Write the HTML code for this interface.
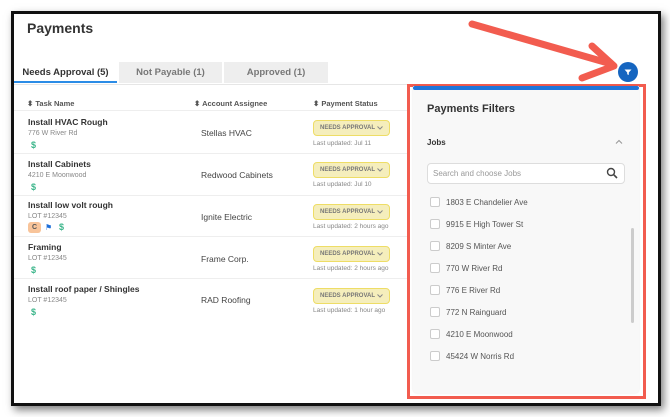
<!DOCTYPE html>
<html><head><meta charset="utf-8"><style>
*{margin:0;padding:0;box-sizing:border-box}
body{width:670px;height:417px;background:#fff;font-family:"Liberation Sans",sans-serif;position:relative;overflow:hidden;color:#333}
.frame{position:absolute;left:11px;top:11px;width:650px;height:395px;border:3px solid #111;background:#fff;box-shadow:3px 4px 8px rgba(0,0,0,.5)}
.a{position:absolute;white-space:nowrap}
h1{position:absolute;left:27px;top:20px;font-size:14px;font-weight:bold;color:#333}
.tab{position:absolute;top:62px;height:21px;font-size:9.5px;font-weight:bold;text-align:center;line-height:21px}
.th{position:absolute;top:99px;font-size:7.5px;font-weight:bold;color:#555}
.t{font-size:8.5px;font-weight:bold;color:#333}
.s{font-size:7px;color:#888}
.d{font-size:9px;color:#3bb58a;font-weight:bold}
.as{font-size:8.5px;color:#444}
.badge{position:absolute;left:313px;width:77px;height:16px;background:#f5eebc;border:1px solid #eedd66;border-radius:4px;font-size:6px;font-weight:bold;color:#777;line-height:14px;padding-left:6px;white-space:nowrap}
.badge svg{position:absolute;right:6px;top:5px}
.lu{font-size:6.5px;color:#888}
.sep{position:absolute;left:14px;width:393px;height:1px;background:#eee}
.cb{position:absolute;left:430px;width:10px;height:10px;border:1px solid #ccc;border-radius:2px;background:#fff}
.job{font-size:8px;color:#555}
</style></head><body>
<div class="frame"></div>
<h1>Payments</h1>
<div class="tab" style="left:14px;width:103px;color:#333;border-bottom:2px solid #2b8ce6">Needs Approval (5)</div>
<div class="tab" style="left:119px;width:103px;background:#eee;color:#777">Not Payable (1)</div>
<div class="tab" style="left:224px;width:104px;background:#eee;color:#777">Approved (1)</div>
<div class="sep" style="top:84px;background:#e6e6e6"></div>
<div class="th" style="left:27px">⬍ Task Name</div>
<div class="th" style="left:194px">⬍ Account Assignee</div>
<div class="th" style="left:313px">⬍ Payment Status</div>
<div class="sep" style="top:110px"></div>

<div class="a t" style="left:28px;top:117px">Install HVAC Rough</div>
<div class="a s" style="left:28px;top:130px">776 W River Rd</div>
<div class="a d" style="left:31px;top:140px">$</div>
<div class="a as" style="left:201px;top:128px">Stellas HVAC</div>
<div class="badge" style="top:120px">NEEDS APPROVAL<svg width="6" height="4" viewBox="0 0 6 4"><path d="M.5.5L3 3L5.5.5" fill="none" stroke="#888" stroke-width="1"/></svg></div>
<div class="a lu" style="left:313px;top:140px">Last updated: Jul 11</div>
<div class="sep" style="top:153px"></div>

<div class="a t" style="left:28px;top:159px">Install Cabinets</div>
<div class="a s" style="left:28px;top:172px">4210 E Moonwood</div>
<div class="a d" style="left:31px;top:182px">$</div>
<div class="a as" style="left:201px;top:170px">Redwood Cabinets</div>
<div class="badge" style="top:162px">NEEDS APPROVAL<svg width="6" height="4" viewBox="0 0 6 4"><path d="M.5.5L3 3L5.5.5" fill="none" stroke="#888" stroke-width="1"/></svg></div>
<div class="a lu" style="left:313px;top:181px">Last updated: Jul 10</div>
<div class="sep" style="top:195px"></div>

<div class="a t" style="left:28px;top:200px">Install low volt rough</div>
<div class="a s" style="left:28px;top:213px">LOT #12345</div>
<div class="a" style="left:28px;top:222px;width:13px;height:11px;background:#f8c49a;border-radius:3px;font-size:7px;font-weight:bold;text-align:center;line-height:11px;color:#555">C</div>
<div class="a" style="left:45px;top:223px;font-size:8px;color:#1e6fd9">⚑</div>
<div class="a d" style="left:59px;top:222px">$</div>
<div class="a as" style="left:201px;top:212px">Ignite Electric</div>
<div class="badge" style="top:204px">NEEDS APPROVAL<svg width="6" height="4" viewBox="0 0 6 4"><path d="M.5.5L3 3L5.5.5" fill="none" stroke="#888" stroke-width="1"/></svg></div>
<div class="a lu" style="left:313px;top:223px">Last updated: 2 hours ago</div>
<div class="sep" style="top:236px"></div>

<div class="a t" style="left:28px;top:242px">Framing</div>
<div class="a s" style="left:28px;top:255px">LOT #12345</div>
<div class="a d" style="left:31px;top:265px">$</div>
<div class="a as" style="left:201px;top:254px">Frame Corp.</div>
<div class="badge" style="top:246px">NEEDS APPROVAL<svg width="6" height="4" viewBox="0 0 6 4"><path d="M.5.5L3 3L5.5.5" fill="none" stroke="#888" stroke-width="1"/></svg></div>
<div class="a lu" style="left:313px;top:265px">Last updated: 2 hours ago</div>
<div class="sep" style="top:278px"></div>

<div class="a t" style="left:28px;top:284px">Install roof paper / Shingles</div>
<div class="a s" style="left:28px;top:297px">LOT #12345</div>
<div class="a d" style="left:31px;top:307px">$</div>
<div class="a as" style="left:201px;top:295px">RAD Roofing</div>
<div class="badge" style="top:288px">NEEDS APPROVAL<svg width="6" height="4" viewBox="0 0 6 4"><path d="M.5.5L3 3L5.5.5" fill="none" stroke="#888" stroke-width="1"/></svg></div>
<div class="a lu" style="left:313px;top:307px">Last updated: 1 hour ago</div>

<div class="a" style="left:407px;top:84px;width:239px;height:315px;border:3px solid #f25c4f"></div>
<div class="a" style="left:413px;top:86px;width:226px;height:307px;background:#f8f8f8;border-radius:0 0 4px 4px;box-shadow:0 0 2px rgba(0,0,0,.1)"></div>
<div class="a" style="left:413px;top:86px;width:226px;height:4px;background:#1e74d9;border-radius:2px"></div>
<div class="a" style="left:427px;top:103px;font-size:11px;font-weight:bold;color:#333">Payments Filters</div>
<div class="a" style="left:427px;top:138px;font-size:8px;font-weight:bold;color:#333">Jobs</div>
<svg class="a" style="left:615px;top:139px" width="8" height="6" viewBox="0 0 8 6"><path d="M1 4.5L4 1.5L7 4.5" fill="none" stroke="#999" stroke-width="1.1"/></svg>
<div class="a" style="left:427px;top:163px;width:198px;height:21px;background:#fff;border:1px solid #ddd;border-radius:4px"></div>
<div class="a" style="left:433px;top:169px;font-size:8px;color:#999">Search and choose Jobs</div>
<svg class="a" style="left:606px;top:167px" width="12" height="12" viewBox="0 0 12 12"><circle cx="5" cy="5" r="3.5" fill="none" stroke="#444" stroke-width="1.4"/><path d="M7.6 7.6L11 11" stroke="#444" stroke-width="1.6"/></svg>
<div class="a" style="left:631px;top:228px;width:3px;height:95px;background:#ccc;border-radius:2px"></div>

<div class="cb" style="top:197px"></div><div class="a job" style="left:446px;top:198px">1803 E Chandelier Ave</div>
<div class="cb" style="top:219px"></div><div class="a job" style="left:446px;top:220px">9915 E High Tower St</div>
<div class="cb" style="top:241px"></div><div class="a job" style="left:446px;top:242px">8209 S Minter Ave</div>
<div class="cb" style="top:263px"></div><div class="a job" style="left:446px;top:264px">770 W River Rd</div>
<div class="cb" style="top:285px"></div><div class="a job" style="left:446px;top:286px">776 E River Rd</div>
<div class="cb" style="top:307px"></div><div class="a job" style="left:446px;top:308px">772 N Rainguard</div>
<div class="cb" style="top:329px"></div><div class="a job" style="left:446px;top:330px">4210 E Moonwood</div>
<div class="cb" style="top:351px"></div><div class="a job" style="left:446px;top:352px">45424 W Norris Rd</div>

<div class="a" style="left:618px;top:62px;width:20px;height:20px;border-radius:50%;background:#1565c0"></div>
<svg class="a" style="left:623px;top:67px" width="10" height="10" viewBox="0 0 10 10"><path d="M1.5 2.5H8.5L5.8 5.5V8L4.2 7.2V5.5Z" fill="#fff"/></svg>
<svg class="a" style="left:0;top:0" width="670" height="417"><path d="M472 24L608 63" stroke="#f25c4f" stroke-width="7" stroke-linecap="round"/><path d="M592 46L614 66L582 78" fill="none" stroke="#f25c4f" stroke-width="7" stroke-linecap="round" stroke-linejoin="round"/></svg>
</body></html>
